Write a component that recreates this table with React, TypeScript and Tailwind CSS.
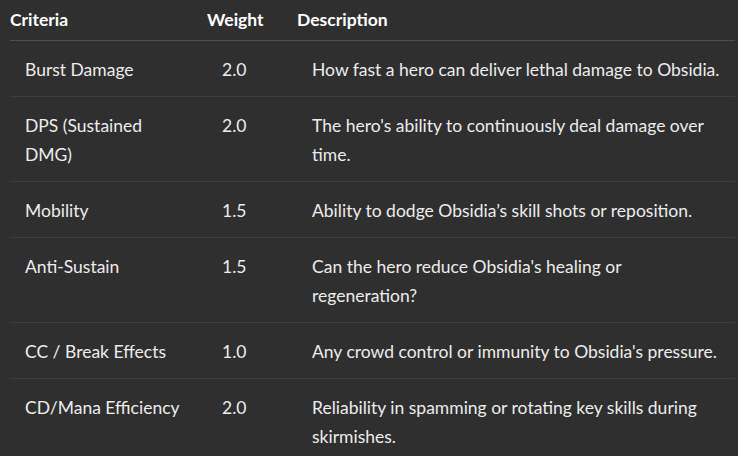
const rows = [
  { name: 'Burst Damage', weight: '2.0', desc: 'How fast a hero can deliver lethal damage to Obsidia.' },
  { name: 'DPS (Sustained DMG)', weight: '2.0', desc: "The hero's ability to continuously deal damage over time." },
  { name: 'Mobility', weight: '1.5', desc: 'Ability to dodge Obsidia’s skill shots or reposition.' },
  { name: 'Anti-Sustain', weight: '1.5', desc: "Can the hero reduce Obsidia's healing or regeneration?" },
  { name: 'CC / Break Effects', weight: '1.0', desc: "Any crowd control or immunity to Obsidia's pressure." },
  { name: 'CD/Mana Efficiency', weight: '2.0', desc: 'Reliability in spamming or rotating key skills during skirmishes.' },
]

export default function App() {
  return (
    <div className="h-[456px] w-[738px] overflow-hidden bg-[#2f2f2f] pl-[10px] pr-[3px] font-['Lato','Liberation_Sans',sans-serif] text-[17.5px] text-[#ececec]">
      <table className="w-[725px] table-fixed border-collapse">
        <colgroup>
          <col className="w-[197px]" />
          <col className="w-[90px]" />
          <col className="w-[438px]" />
        </colgroup>
        <thead>
          <tr className="border-b border-[#4d4d4d]">
            <th className="py-[6px] text-left font-bold leading-[28px] text-white">Criteria</th>
            <th className="py-[6px] text-left font-bold leading-[28px] text-white">Weight</th>
            <th className="py-[6px] text-left font-bold leading-[28px] text-white">Description</th>
          </tr>
        </thead>
        <tbody>
          {rows.map((r) => (
            <tr key={r.name} className="border-b border-[#3d3d3d]">
              <td className="pt-[14px] pb-[12px] pl-[15px] pr-[20px] align-top leading-[29px]">{r.name}</td>
              <td className="pt-[14px] pb-[12px] pl-[15px] align-top leading-[29px]">{r.weight}</td>
              <td className="pt-[14px] pb-[12px] pl-[15px] pr-[10px] align-top leading-[29px]">{r.desc}</td>
            </tr>
          ))}
        </tbody>
      </table>
    </div>
  )
}
